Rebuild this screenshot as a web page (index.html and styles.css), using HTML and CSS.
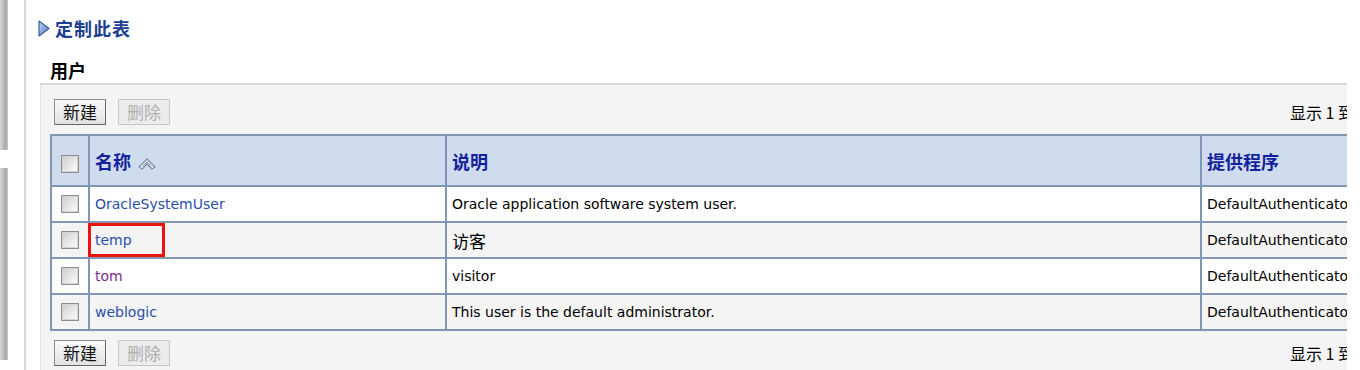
FILE: index.html
```html
<!DOCTYPE html>
<html lang="zh">
<head>
<meta charset="utf-8">
<title>用户</title>
<link rel="stylesheet" href="styles.css">
</head>
<body>
<div class="page">
	<div class="edge">
		<div class="edge-seg edge-top"></div>
		<div class="edge-seg edge-bottom"></div>
	</div>
	<div class="rule"></div>
	<div class="main">
		<div class="customize">
			<svg class="tri" width="12" height="17" viewBox="0 0 12 17">
				<defs>
					<linearGradient id="trig" x1="0" y1="0" x2="1" y2="1">
						<stop offset="0" stop-color="#c9d8f0"/>
						<stop offset="1" stop-color="#4d72b8"/>
					</linearGradient>
				</defs>
				<polygon points="1,1 11,8.5 1,16" fill="url(#trig)" stroke="#3d5e9e" stroke-width="1.2" stroke-linejoin="round"/>
			</svg>
			<span class="customize-text">定制此表</span>
		</div>
		<div class="section-title">用户</div>
		<div class="panel">
			<div class="toolbar">
				<div class="btns">
					<button class="btn">新建</button>
					<button class="btn btn-off">删除</button>
				</div>
				<div class="pager">显示 1 到 4 个，共 4 个</div>
			</div>
			<table class="grid">
				<colgroup>
					<col class="c-check">
					<col class="c-name">
					<col class="c-desc">
					<col class="c-prov">
				</colgroup>
				<tr class="head">
					<th><span class="cb"></span></th>
					<th>名称
						<svg class="sort" width="20" height="14" viewBox="0 0 20 14">
							<polygon points="2,11 10,3 18,11 15,13 10,8 5,13" fill="#e4ebf5" stroke="#7d8fa8" stroke-width="1.2" stroke-linejoin="round"/>
							<polyline points="6,10 10,6 14,10" fill="none" stroke="#7d8fa8" stroke-width="1"/>
						</svg>
					</th>
					<th>说明</th>
					<th>提供程序</th>
				</tr>
				<tr>
					<td><span class="cb"></span></td>
					<td><a class="link">OracleSystemUser</a></td>
					<td>Oracle application software system user.</td>
					<td>DefaultAuthenticator</td>
				</tr>
				<tr class="alt">
					<td><span class="cb"></span></td>
					<td class="marked"><a class="link">temp</a><span class="mark"></span></td>
					<td class="zh">访客</td>
					<td>DefaultAuthenticator</td>
				</tr>
				<tr>
					<td><span class="cb"></span></td>
					<td><a class="link visited">tom</a></td>
					<td>visitor</td>
					<td>DefaultAuthenticator</td>
				</tr>
				<tr class="alt">
					<td><span class="cb"></span></td>
					<td><a class="link">weblogic</a></td>
					<td>This user is the default administrator.</td>
					<td>DefaultAuthenticator</td>
				</tr>
			</table>
			<div class="toolbar toolbar-bottom">
				<div class="btns">
					<button class="btn">新建</button>
					<button class="btn btn-off">删除</button>
				</div>
				<div class="pager">显示 1 到 4 个，共 4 个</div>
			</div>
		</div>
	</div>
</div>
</body>
</html>
```

FILE: styles.css
```css
body
{
	margin: 0;
	background: #ffffff;
	font-family: "DejaVu Sans", "Noto Sans CJK SC", sans-serif;
	font-size: 14px;
	color: #000000;
	overflow: hidden;
}
.page
{
	display: flex;
	height: 370px;
}
.edge
{
	width: 8px;
	display: flex;
	flex-direction: column;
	gap: 18px;
	flex: none;
}
.edge-seg
{
	background: linear-gradient(to right, #d8d8d8, #a8a8a8 70%, #c8c8c8);
}
.edge-top
{
	height: 150px;
}
.edge-bottom
{
	height: 192px;
}
.rule
{
	width: 2px;
	margin-left: 16px;
	background: #d6d6d6;
	flex: none;
}
.main
{
	flex: 1;
	min-width: 0;
	padding-left: 12px;
	padding-right: 13px;
}
.customize
{
	display: flex;
	align-items: center;
	gap: 5px;
	margin-top: 17px;
	height: 22px;
}
.customize-text
{
	font-family: "Noto Sans CJK SC", sans-serif;
	font-weight: bold;
	font-size: 18px;
	letter-spacing: 1px;
	color: #1b3f93;
}
.section-title
{
	font-family: "Noto Sans CJK SC", sans-serif;
	font-weight: bold;
	font-size: 18px;
	margin: 19px 0 0 12px;
	height: 25px;
	line-height: 25px;
}
.panel
{
	margin-left: 2px;
	background: #f4f4f4;
	border-top: 2px solid #d9d9d9;
	border-left: 1px solid #e2e2e2;
	padding: 13px 0 0 9px;
	overflow: hidden;
	height: 300px;
}
.toolbar
{
	display: grid;
	grid-template-columns: 1236px auto;
	align-items: center;
	padding-left: 4px;
	height: 27px;
	white-space: nowrap;
}
.toolbar-bottom
{
	margin-top: 8px;
}
.btns
{
	display: flex;
	gap: 12px;
}
.btn
{
	font-family: "Noto Sans CJK SC", sans-serif;
	font-size: 17px;
	line-height: 22px;
	height: 26px;
	width: 52px;
	padding: 0;
	color: #111111;
	background: linear-gradient(#fafafa, #e2e2e2);
	border: 1px solid #8c8c8c;
	border-right-color: #666666;
	border-bottom-color: #666666;
}
.btn-off
{
	color: #b0b0b0;
	background: #ececec;
	border-color: #c6c6c6;
}
.pager
{
	font-family: "Noto Sans CJK SC", sans-serif;
	font-size: 16px;
}
.grid
{
	margin-top: 9px;
	border-collapse: collapse;
	table-layout: fixed;
	width: 1420px;
	background: #ffffff;
}
.c-check
{
	width: 38px;
}
.c-name
{
	width: 357px;
}
.c-desc
{
	width: 755px;
}
.grid th, .grid td
{
	border: 2px solid #7f96b4;
	text-align: left;
	white-space: nowrap;
	overflow: hidden;
	padding: 0 0 0 5px;
}
.grid th:first-child, .grid td:first-child
{
	padding: 0;
	text-align: center;
}
.head th
{
	height: 49px;
	background: #cfdcee;
	font-family: "Noto Sans CJK SC", sans-serif;
	font-size: 18px;
	font-weight: bold;
	color: #13229c;
}
.sort
{
	vertical-align: -1px;
	margin-left: 2px;
}
.grid td
{
	height: 34px;
}
.alt td
{
	background: #f4f4f4;
}
.zh
{
	font-family: "Noto Sans CJK SC", sans-serif;
	font-size: 17px;
}
.link
{
	color: #2a4fa6;
}
.visited
{
	color: #7b2a8c;
}
.cb
{
	display: inline-block;
	width: 16px;
	height: 16px;
	vertical-align: middle;
	border: 1px solid #8e8e8e;
	outline: 1px solid #d4d4d4;
	outline-offset: -2px;
	background: linear-gradient(135deg, #cdcdcd, #ffffff);
}
.grid td.marked
{
	position: relative;
	overflow: visible;
}
.mark
{
	position: absolute;
	left: -2px;
	top: 0;
	width: 71px;
	height: 28px;
	border: 3px solid #ee1111;
}
```
